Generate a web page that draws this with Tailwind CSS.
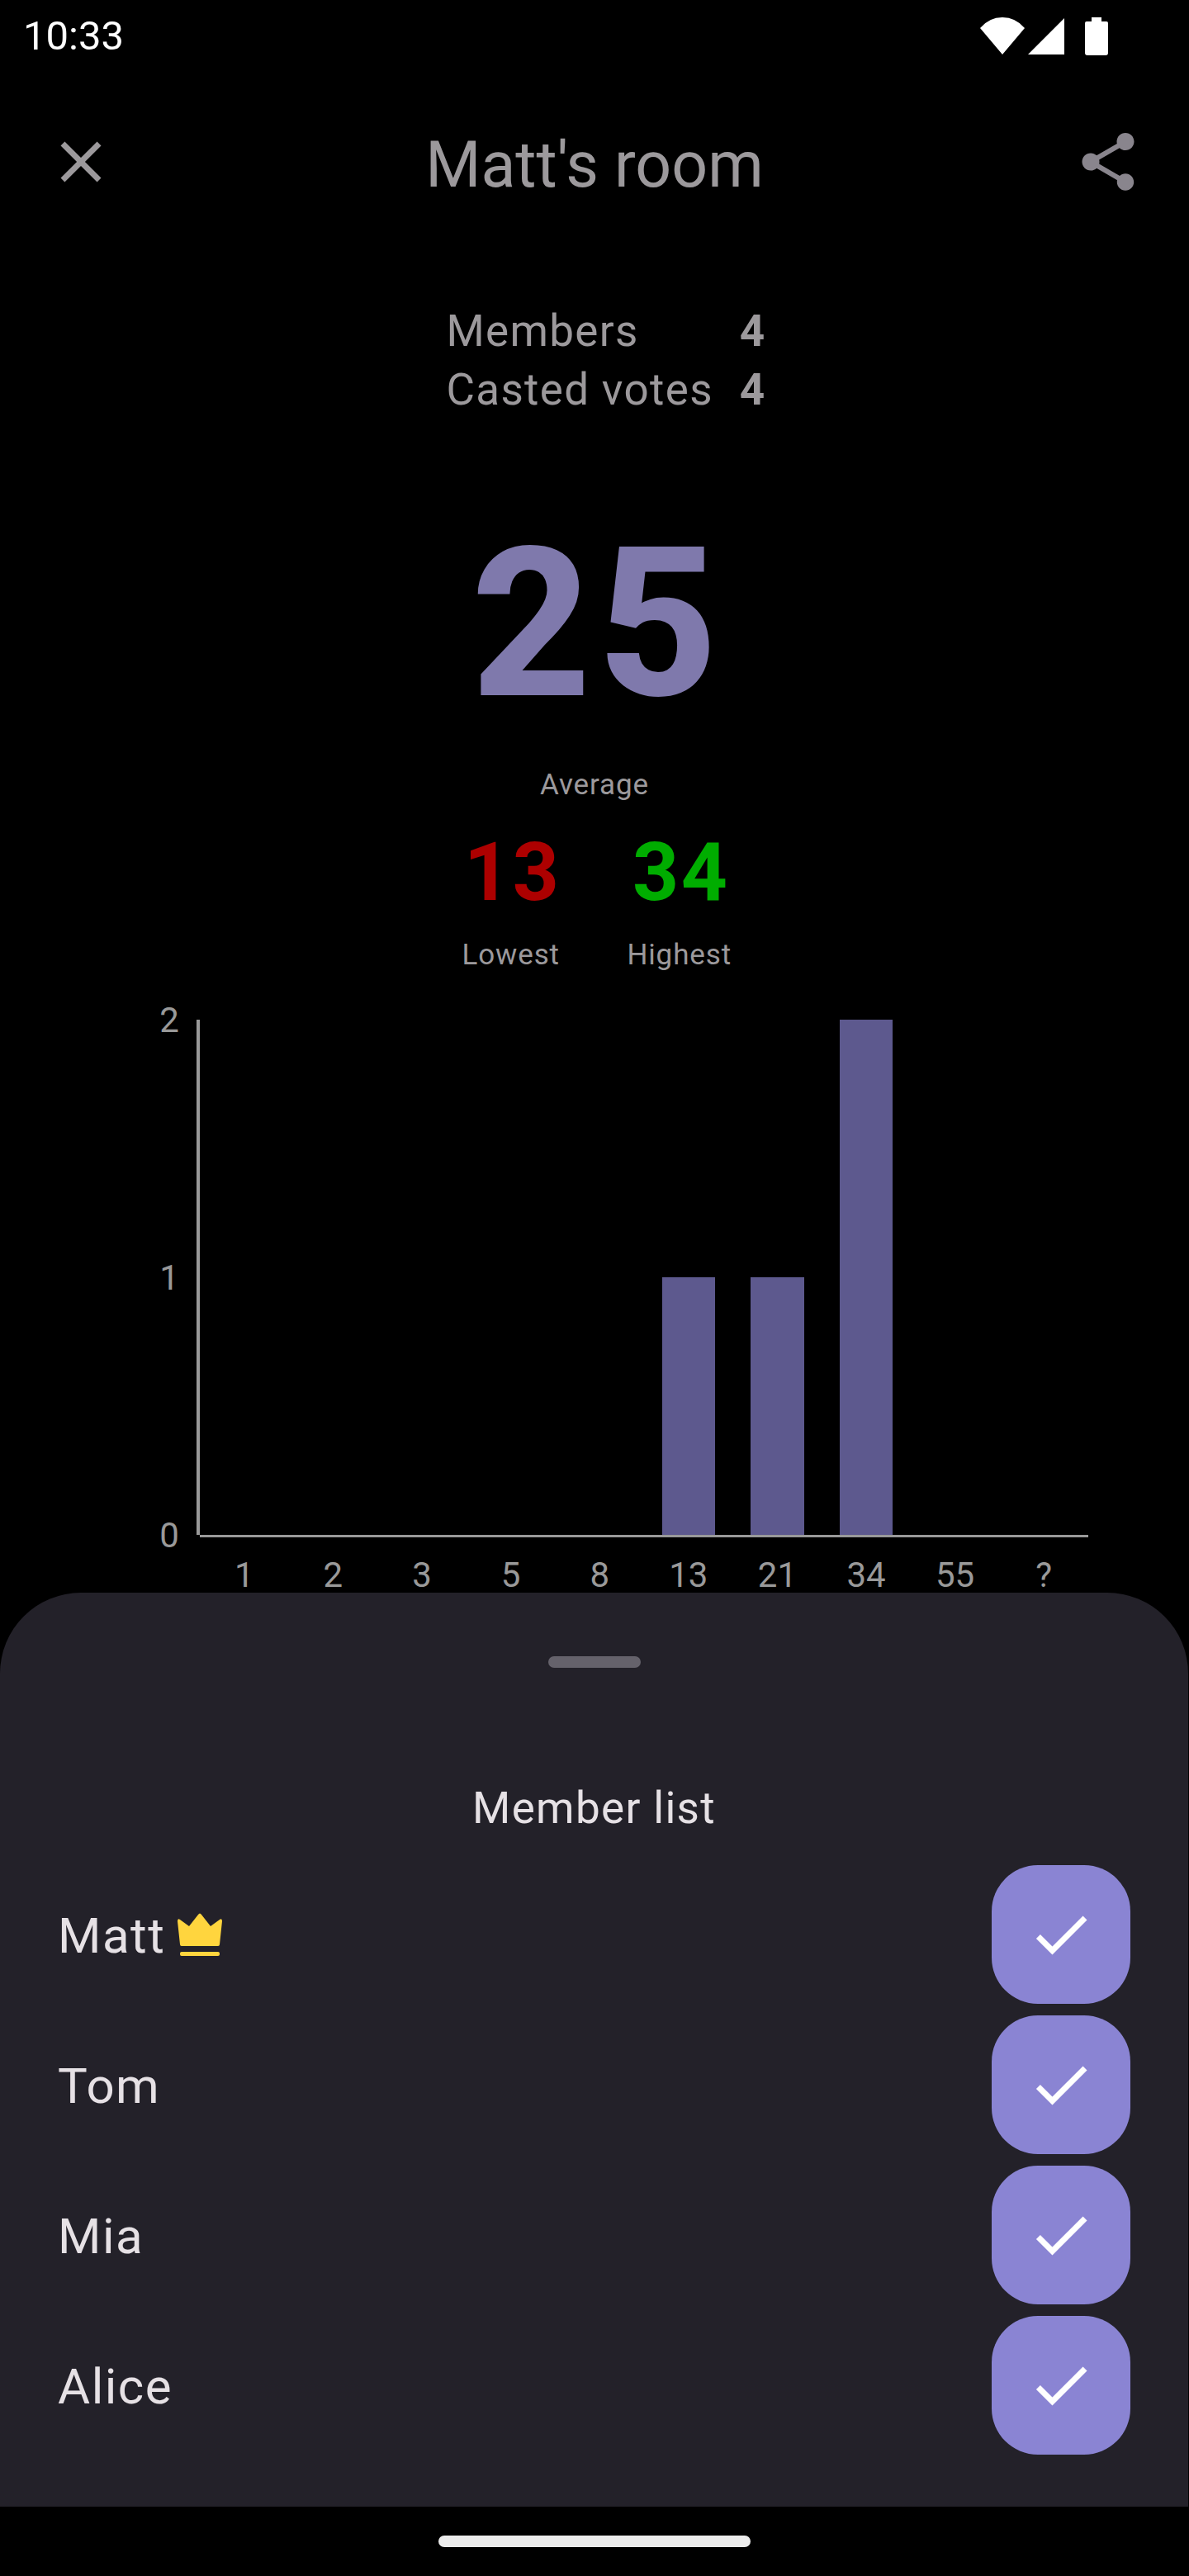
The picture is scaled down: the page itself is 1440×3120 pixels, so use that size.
<!DOCTYPE html>
<html lang="en">
<head>
<meta charset="utf-8">
<meta name="viewport" content="width=device-width, initial-scale=1">
<title>Matt's room</title>
<script src="https://cdn.jsdelivr.net/npm/@tailwindcss/browser@4"></script>
</head>
<body class="flex min-h-screen flex-col bg-black font-[Roboto,sans-serif] text-[#9c999c]">

<!-- Status bar -->
<div class="flex h-[88px] items-center justify-between pr-[98px] pl-7 text-white">
  <time class="text-[49px] leading-[56px]">10:33</time>
  <div class="flex items-center">
    <svg class="h-[46px] w-[54px]" viewBox="0 0 54 46" fill="currentColor" role="img" aria-label="Wi-Fi"><path d="M0 13Q11 0 27 0T54 13L27 45Z"/></svg>
    <svg class="ml-1 h-[46px] w-11" viewBox="0 0 44 46" fill="currentColor" role="img" aria-label="Signal"><path d="M44 1V45H0Z"/></svg>
    <svg class="ml-[25px] h-[46px] w-7" viewBox="0 0 28 46" fill="currentColor" role="img" aria-label="Battery"><path d="M8 0H20V5H26Q28 5 28 7V43Q28 46 25 46H3Q0 46 0 43V7Q0 5 2 5H8Z"/></svg>
  </div>
</div>

<header class="flex h-[216px] items-center justify-between px-14">
  <button type="button" aria-label="Close" class="size-[84px]">
    <svg class="size-full" viewBox="0 0 24 24" fill="currentColor"><path d="M19 6.41 17.59 5 12 10.59 6.41 5 5 6.41 10.59 12 5 17.59 6.41 19 12 13.41 17.59 19 19 17.59 13.41 12z"/></svg>
  </button>
  <h1 class="pt-2 text-[77px] leading-[98px]">Matt's room</h1>
  <button type="button" aria-label="Share" class="size-[84px] text-[#89858d]">
    <svg class="size-full" viewBox="0 0 24 24" fill="currentColor"><path d="M18 16.08c-.76 0-1.44.3-1.96.77L8.91 12.7c.05-.23.09-.46.09-.7s-.04-.47-.09-.7l7.05-4.11c.54.5 1.25.81 2.04.81 1.66 0 3-1.34 3-3s-1.34-3-3-3-3 1.34-3 3c0 .24.04.47.09.7L8.04 9.81C7.5 9.31 6.79 9 6 9c-1.66 0-3 1.34-3 3s1.34 3 3 3c.79 0 1.5-.31 2.04-.81l7.12 4.16c-.05.21-.08.43-.08.65 0 1.61 1.31 2.92 2.92 2.92s2.92-1.31 2.92-2.92-1.31-2.92-2.92-2.92z"/></svg>
  </button>
</header>

<main class="flex flex-col pt-[62px]">
  <dl class="grid grid-cols-[auto_auto] justify-center gap-x-8 pl-7 text-[53px] leading-[71px] tracking-wide">
    <dt>Members</dt><dd class="font-bold">4</dd>
    <dt>Casted votes</dt><dd class="font-bold">4</dd>
  </dl>

  <!-- Vote summary -->
  <dl class="mt-[101px] text-center text-[35px] leading-[41px] tracking-wide">
    <div class="flex flex-col-reverse">
      <dt class="mt-[26px]">Average</dt>
      <dd class="pl-2 text-[252px] leading-[295px] font-extrabold tracking-[8px] text-[#7f79ac]">25</dd>
    </div>
    <div class="mt-7 flex justify-center gap-20 pl-1">
      <div class="flex flex-col-reverse">
        <dt class="mt-[22px]">Lowest</dt>
        <dd class="pl-1 text-[98px] leading-[115px] font-bold tracking-wide text-[#ad0000]">13</dd>
      </div>
      <div class="flex flex-col-reverse">
        <dt class="mt-[22px]">Highest</dt>
        <dd class="pl-1 text-[98px] leading-[115px] font-bold tracking-wide text-[#00ad00]">34</dd>
      </div>
    </div>
  </dl>

  <!-- Vote distribution -->
  <section aria-label="Votes per card" class="mt-[58px] pr-[122px] pl-48 text-center text-[42px] leading-[43px] text-[#999]">
    <div class="flex">
      <div class="flex w-[50px] flex-col justify-between">
        <div class="flex h-0 w-[26px] items-center justify-center">2</div>
        <div class="flex h-0 w-[26px] items-center justify-center">1</div>
        <div class="flex h-0 w-[26px] items-center justify-center">0</div>
      </div>
      <div class="grid h-[624px] flex-1 grid-cols-10 items-end shadow-[0_3px_0_#999]">
        <div class="-ml-1 h-full w-1 bg-[#999]"></div>
        <div></div>
        <div></div>
        <div></div>
        <div></div>
        <div class="mx-auto w-3/5 bg-[#5d598e]" style="height:50%"></div>
        <div class="mx-auto w-3/5 bg-[#5d598e]" style="height:50%"></div>
        <div class="mx-auto w-3/5 bg-[#5d598e]" style="height:100%"></div>
        <div></div>
        <div></div>
      </div>
    </div>
    <div class="grid grid-cols-10 pt-[27px] pl-[50px]">
      <span>1</span><span>2</span><span>3</span><span>5</span><span>8</span><span>13</span><span>21</span><span>34</span><span>55</span><span>?</span>
    </div>
  </section>
</main>

<!-- Bottom sheet -->
<section class="mr-px flex flex-1 flex-col rounded-t-[98px] bg-[#232129] px-[70px] pt-[77px] pb-[63px] text-[#e6e1e5]">
  <button type="button" aria-label="Drag handle" class="h-3.5 w-28 self-center rounded-full bg-[#65626b]"></button>
  <h2 class="mt-[135px] text-center text-[53px] leading-[71px] tracking-wide">Member list</h2>
  <ul class="mt-[33px] flex flex-col gap-3.5 text-[60px] leading-[84px] tracking-wide">
    <li class="flex items-center justify-between">
      <span class="flex items-center gap-3 pt-1">Matt
        <svg class="size-[60px]" viewBox="0 0 60 60" fill="#ffd53e" role="img" aria-label="Room owner"><path d="M3 12Q3 8 6 10L17 18 28 4Q30 1 32 4L43 18 54 10Q57 8 57 12L54 40Q54 42 52 42H8Q6 42 6 40ZM8 49H52Q54 49 54 51V52Q54 54 52 54H8Q6 54 6 52V51Q6 49 8 49Z"/></svg>
      </span>
      <span class="rounded-[56px] bg-[#8a84d3] p-[42px] text-white"><svg class="size-[84px]" viewBox="0 0 24 24" fill="currentColor" role="img" aria-label="Voted"><path d="M9 16.17 4.83 12l-1.42 1.41L9 19 21 7l-1.41-1.41z"/></svg></span>
    </li>
    <li class="flex items-center justify-between">
      <span class="pt-1">Tom</span>
      <span class="rounded-[56px] bg-[#8a84d3] p-[42px] text-white"><svg class="size-[84px]" viewBox="0 0 24 24" fill="currentColor" role="img" aria-label="Voted"><path d="M9 16.17 4.83 12l-1.42 1.41L9 19 21 7l-1.41-1.41z"/></svg></span>
    </li>
    <li class="flex items-center justify-between">
      <span class="pt-1">Mia</span>
      <span class="rounded-[56px] bg-[#8a84d3] p-[42px] text-white"><svg class="size-[84px]" viewBox="0 0 24 24" fill="currentColor" role="img" aria-label="Voted"><path d="M9 16.17 4.83 12l-1.42 1.41L9 19 21 7l-1.41-1.41z"/></svg></span>
    </li>
    <li class="flex items-center justify-between">
      <span class="pt-1">Alice</span>
      <span class="rounded-[56px] bg-[#8a84d3] p-[42px] text-white"><svg class="size-[84px]" viewBox="0 0 24 24" fill="currentColor" role="img" aria-label="Voted"><path d="M9 16.17 4.83 12l-1.42 1.41L9 19 21 7l-1.41-1.41z"/></svg></span>
    </li>
  </ul>
</section>

<!-- Gesture navigation bar -->
<div class="flex h-[84px] items-center justify-center">
  <div class="h-3.5 w-[378px] rounded-full bg-[#ececec]"></div>
</div>
</body>
</html>
